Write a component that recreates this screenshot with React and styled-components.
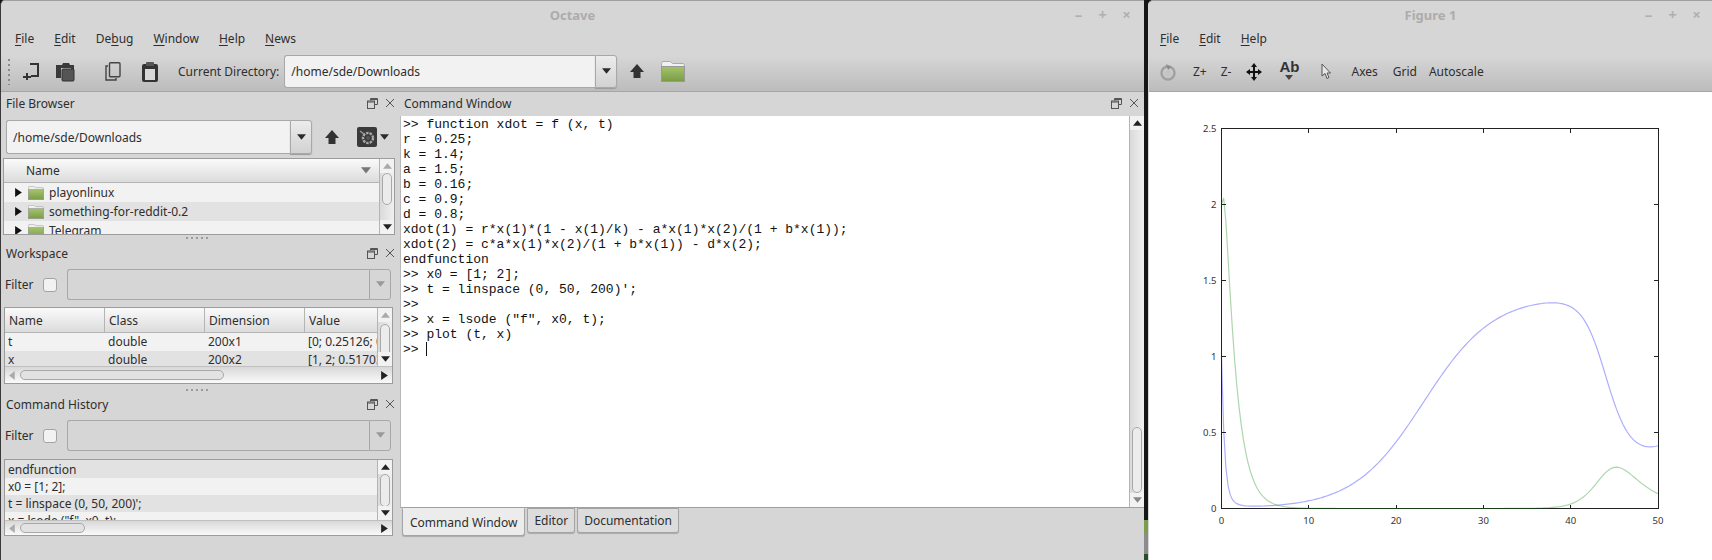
import React from "react";
import styled, { createGlobalStyle } from "styled-components";

const GlobalStyle = createGlobalStyle`
  html, body {
    margin: 0;
    padding: 0;
    background: #d6d6d6;
    overflow: hidden;
  }
  * {
    box-sizing: border-box;
  }
`;

const Screen = styled.div`
  display: flex;
  width: 1712px;
  height: 560px;
  overflow: hidden;
  background: #111;
  font-family: "Noto Sans", sans-serif;
  font-size: 12px;
  color: #2e2e2e;
`;

const Window = styled.div`
  display: flex;
  flex-direction: column;
  width: ${(p) => p.$width};
  flex: ${(p) => p.$flex || "none"};
  background: #d6d6d6;
  border-top: 1px solid #a0a0a0;
  border-left: 1px solid ${(p) => p.$edge};
  border-top-left-radius: 5px;
  overflow: hidden;
`;

const Divider = styled.div`
  width: 4px;
  flex: none;
  background: linear-gradient(
    #161616 0, #161616 520px, #7c9c4c 520px, #7c9c4c 533px, #8c8c8c 533px, #8c8c8c 554px, #2c4c2c 554px
  );
`;

const TitleBar = styled.div`
  position: relative;
  height: 28px;
  flex: none;
  display: flex;
  align-items: center;
  justify-content: center;
  font-weight: 700;
  color: #acacac;
  font-size: 13px;
`;

const WmButtons = styled.div`
  position: absolute;
  top: 5px;
  right: ${(p) => p.$right}px;
  display: flex;
  gap: 9px;
  color: #b0b0b0;
  font-size: 15px;
  font-weight: 700;
  line-height: 16px;
`;

const WmButton = styled.span`
  width: 15px;
  text-align: center;
`;

const MenuBar = styled.div`
  display: flex;
  height: 18px;
  flex: none;
  padding-left: ${(p) => p.$pad}px;
  align-items: center;
`;

const MenuItem = styled.span`
  padding: 0 10px;
  & u {
    text-underline-offset: 2px;
  }
`;

const Toolbar = styled.div`
  display: flex;
  align-items: center;
  height: 45px;
  flex: none;
  padding: 5px 0 0 ${(p) => p.$pad}px;
  background: linear-gradient(#d6d6d6, #d6d6d6 20%, #bcbcbc);
  border-bottom: 1px solid #a6a6a6;
`;

const ToolGrip = styled.div`
  width: 2px;
  height: 26px;
  margin-right: 13px;
  background: repeating-linear-gradient(#8a8a8a 0 2px, transparent 2px 5px);
`;

const ToolSlot = styled.span`
  display: flex;
  flex: none;
  justify-content: center;
  align-items: center;
  width: ${(p) => p.$w}px;
  margin-right: ${(p) => p.$gap || 0}px;
`;

const ToolLabel = styled.span`
  flex: none;
  margin-right: ${(p) => p.$gap || 0}px;
`;

const Combo = styled.div`
  display: flex;
  flex: none;
  width: ${(p) => p.$w}px;
  height: ${(p) => p.$h}px;
  margin-right: ${(p) => p.$gap || 0}px;
`;

const ComboField = styled.div`
  flex: 1;
  display: flex;
  align-items: center;
  padding-left: 6px;
  background: ${(p) => (p.$disabled ? "#d6d6d6" : "#f2f2f2")};
  border: 1px solid #a8a8a8;
  border-right: none;
  border-radius: 3px 0 0 3px;
  white-space: nowrap;
  overflow: hidden;
`;

const ComboButton = styled.div`
  width: 22px;
  flex: none;
  display: flex;
  align-items: center;
  justify-content: center;
  background: ${(p) => (p.$disabled ? "#d6d6d6" : "linear-gradient(#ececec, #d2d2d2)")};
  border: 1px solid #a8a8a8;
  border-radius: 0 3px 3px 0;
  box-shadow: ${(p) => (p.$disabled ? "none" : "0 1px 1px #999")};
`;

const Body = styled.div`
  flex: 1;
  display: flex;
  min-height: 0;
`;

const LeftDock = styled.div`
  width: 399px;
  flex: none;
  display: flex;
  flex-direction: column;
`;

const CenterDock = styled.div`
  flex: 1;
  display: flex;
  flex-direction: column;
  min-width: 0;
`;

const DockTitle = styled.div`
  height: ${(p) => p.$h}px;
  flex: none;
  display: flex;
  align-items: center;
  justify-content: space-between;
  padding: 0 ${(p) => p.$right}px 2px ${(p) => p.$left}px;
`;

const DockActions = styled.div`
  display: flex;
  align-items: center;
  gap: 7px;
`;

const ComboRow = styled.div`
  display: flex;
  align-items: center;
  height: 34px;
  padding-left: 5px;
  margin: 4px 0;
  flex: none;
`;

const FilterRow = styled.div`
  display: flex;
  align-items: center;
  height: 31px;
  padding-left: 4px;
  margin: ${(p) => p.$before}px 0 ${(p) => p.$after}px;
  flex: none;
`;

const FilterLabel = styled.span`
  width: 38px;
  flex: none;
`;

const Checkbox = styled.span`
  width: 14px;
  height: 14px;
  flex: none;
  margin-right: 10px;
  background: #f2f2f2;
  border: 1px solid #a4a4a4;
  border-radius: 3px;
`;

const Frame = styled.div`
  display: grid;
  grid-template-columns: 1fr 15px;
  grid-template-rows: ${(p) => p.$rows};
  width: ${(p) => p.$w}px;
  height: ${(p) => p.$h}px;
  margin-left: ${(p) => p.$left}px;
  border: 1px solid #9c9c9c;
  background: #f0f0f0;
  flex: none;
  overflow: hidden;
`;

const Pane = styled.div`
  min-width: 0;
  overflow: hidden;
`;

const HeaderRow = styled.div`
  display: grid;
  grid-template-columns: ${(p) => p.$cols};
  height: ${(p) => p.$h}px;
  background: linear-gradient(#fafafa, #dcdcdc);
  border-bottom: 1px solid #b4b4b4;
`;

const HeaderCell = styled.div`
  display: flex;
  align-items: center;
  justify-content: space-between;
  padding: 0 ${(p) => p.$right || 0}px 0 ${(p) => p.$left}px;
  border-right: ${(p) => (p.$last ? "none" : "1px solid #b4b4b4")};
`;

const Row = styled.div`
  display: grid;
  grid-template-columns: ${(p) => p.$cols || "1fr"};
  align-items: center;
  height: ${(p) => p.$h}px;
  padding-left: 3px;
  white-space: nowrap;
  overflow: hidden;
  background: ${(p) => (p.$alt ? "#e2e2e2" : "#f2f2f2")};
`;

const Cell = styled.span`
  overflow: hidden;
`;

const TreeItem = styled.div`
  display: flex;
  align-items: center;
  gap: 5px;
`;

const TreeToggle = styled.span`
  display: flex;
  width: 9px;
  margin-left: 7px;
`;

const ScrollBar = styled.div`
  display: flex;
  flex-direction: column;
  align-items: center;
  flex: none;
  width: 15px;
  background: linear-gradient(90deg, #dadada, #f0f0f0);
  border-left: 1px solid #b4b4b4;
  min-height: 0;
`;

const ScrollArrow = styled.div`
  flex: none;
  width: 100%;
  height: 14px;
  display: flex;
  align-items: center;
  justify-content: center;
  background: #f2f2f2;
`;

const ScrollTrack = styled.div`
  flex: 1;
  width: 100%;
  min-height: 0;
  display: flex;
  justify-content: center;
  padding-top: ${(p) => p.$offset}px;
`;

const ScrollThumb = styled.div`
  width: 10px;
  height: ${(p) => p.$h}px;
  background: #ececec;
  border: 1px solid #a8a8a8;
  border-radius: 5px;
  flex: none;
`;

const HScrollBar = styled.div`
  grid-column: 1 / 3;
  display: flex;
  align-items: center;
  background: linear-gradient(#d8d8d8, #fafafa);
  border-top: 1px solid #c0c0c0;
  padding: 0 3px;
`;

const HScrollTrack = styled.div`
  flex: 1;
  padding-left: 3px;
  display: flex;
  align-items: center;
`;

const HScrollThumb = styled.div`
  width: ${(p) => p.$w}px;
  height: 10px;
  background: #e2e2e2;
  border: 1px solid #a8a8a8;
  border-radius: 5px;
`;

const SplitGrip = styled.div`
  height: 8px;
  flex: none;
  margin: ${(p) => p.$margin};
  display: flex;
  justify-content: center;
  align-items: center;
  gap: 3px;
  width: 392px;
  & span {
    width: 2px;
    height: 2px;
    background: #9a9a9a;
  }
`;

const Terminal = styled.div`
  flex: none;
  height: 392px;
  display: flex;
  border-left: 1px solid #b8b8b8;
  border-bottom: 1px solid #a0a0a0;
`;

const TerminalText = styled.pre`
  flex: 1;
  margin: 0;
  padding: 1px 0 0 2px;
  background: #fff;
  color: #111;
  font-family: "Liberation Mono", monospace;
  font-size: 13px;
  line-height: 15px;
`;

const Caret = styled.span`
  display: inline-block;
  width: 1px;
  height: 14px;
  background: #111;
  vertical-align: -3px;
`;

const TabBar = styled.div`
  display: flex;
  align-items: flex-start;
  gap: 2px;
  padding-left: 2px;
  margin-top: -1px;
`;

const Tab = styled.div`
  display: flex;
  align-items: center;
  padding: 0 ${(p) => (p.$active ? 7 : 6)}px;
  height: ${(p) => (p.$active ? 28 : 25)}px;
  margin-top: 1px;
  background: ${(p) => (p.$active ? "#ececec" : "#dcdcdc")};
  border: 1px solid #a4a4a4;
  border-top: 1px solid ${(p) => (p.$active ? "#ececec" : "#a4a4a4")};
  border-radius: 0 0 3px 3px;
  box-shadow: 0 1px 1px #aaa;
`;

const PlotArea = styled.div`
  flex: 1;
  min-height: 0;
  background: #fff;
`;

const Dark = "#2b2b2b";

const FloatIcon = () => (
  <svg width="11" height="11" viewBox="0 0 11 11" fill="none" stroke="#555" strokeWidth="1">
    <path d="M3.5 2.5V.5h7v6H8" />
    <rect x=".5" y="3" width="7" height="7.5" />
    <path d="M.5 4h7M3.5 1.5h7" />
  </svg>
);

const CloseIcon = () => (
  <svg width="10" height="10" viewBox="0 0 10 10" stroke="#555" strokeWidth="1">
    <path d="M1 1l8 8M9 1l-8 8" />
  </svg>
);

const DockButtons = () => (
  <DockActions>
    <FloatIcon />
    <CloseIcon />
  </DockActions>
);

const Triangle = ({ dir = "down", size = 8, color = Dark }) => {
  const points = {
    down: "0,1 8,1 4,6",
    up: "0,6 8,6 4,1",
    left: "6,0 6,8 1,4",
    right: "1,0 1,8 7,4",
  };
  return (
    <svg width={size} height={size} viewBox="0 0 8 8">
      <polygon points={points[dir]} fill={color} />
    </svg>
  );
};

const UpArrow = () => (
  <svg width="14" height="15" viewBox="0 0 14 15">
    <path d="M7 0l7 8h-3.500v6h-7V8H0z" fill="#333" />
  </svg>
);

const FolderIcon = ({ w = 24, h = 21 }) => (
  <svg width={w} height={h} viewBox="0 0 24 21">
    <defs>
      <linearGradient id="folderFill" x1="0" y1="0" x2="0" y2="1">
        <stop offset="0" stopColor="#a4c46c" />
        <stop offset="1" stopColor="#7a9c44" />
      </linearGradient>
    </defs>
    <path d="M.5 20.500V2.500l1-2h8l2 2h11l1 2v16z" fill="#f0f0f0" stroke="#aaa" />
    <rect x=".5" y="5.500" width="23" height="15" fill="url(#folderFill)" stroke="#999" />
  </svg>
);

const NewScriptIcon = () => (
  <svg width="16" height="18" viewBox="0 0 16 18" fill="none" stroke="#333" strokeWidth="2">
    <path d="M7 1h8v12H8" />
    <path d="M4 10v7M0 14h8" />
  </svg>
);

const OpenIcon = () => (
  <svg width="19" height="20" viewBox="0 0 19 20">
    <path d="M0 3h6l1-2h6l1 2h4v13h-3V6H5v10H0z" fill="#3a3a3a" />
    <rect x="6" y="7" width="12" height="12" rx="1" fill="#555" stroke="#333" />
  </svg>
);

const CopyIcon = () => (
  <svg width="16" height="19" viewBox="0 0 16 19" fill="none" stroke="#444" strokeWidth="1.4">
    <rect x="4.500" y=".7" width="10.500" height="14" rx="1" />
    <path d="M3 4H1v14h10v-2" />
  </svg>
);

const PasteIcon = () => (
  <svg width="16" height="20" viewBox="0 0 16 20">
    <rect x="0" y="2" width="16" height="18" rx="2" fill="#333" />
    <rect x="4" y="0" width="8" height="4" rx="1" fill="#555" />
    <rect x="3" y="7" width="10" height="11" fill="#d8d8d8" />
  </svg>
);

const GearIcon = () => (
  <svg width="20" height="20" viewBox="0 0 20 20">
    <rect width="20" height="20" rx="2" fill="#3a3a3a" />
    <circle cx="11" cy="11" r="5" fill="none" stroke="#a8a8a8" strokeWidth="2.400" strokeDasharray="2.500 1" />
    <circle cx="11" cy="11" r="2" fill="#555" />
    <path d="M3 4l4 3" stroke="#999" strokeWidth="1.500" />
  </svg>
);

const ReloadIcon = () => (
  <svg width="16" height="18" viewBox="0 0 16 18" fill="none">
    <circle cx="8" cy="10" r="6.500" stroke="#a0a0a0" strokeWidth="2.400" />
    <circle cx="8" cy="10" r="3" fill="#c4c4c4" />
    <path d="M6 1l5 3-3 3z" fill="#8a8a8a" />
  </svg>
);

const MoveIcon = () => (
  <svg width="16" height="18" viewBox="0 0 16 18" fill="#111">
    <path d="M7 3h2v12H7z" />
    <path d="M1 8h14v2H1z" />
    <path d="M8 0l3 4H5zM8 18l3-4H5zM0 9l4-3v6zM16 9l-4-3v6z" />
  </svg>
);

const PointerIcon = () => (
  <svg width="10" height="17" viewBox="0 0 10 17">
    <path d="M1 1v12l3-2.500 2 5 2-1-2-4.500h3.500z" fill="#e6e6e6" stroke="#555" />
  </svg>
);

const AbIcon = styled.span`
  display: flex;
  flex-direction: column;
  align-items: center;
  font-family: "Liberation Sans", sans-serif;
  font-weight: 700;
  font-size: 15px;
  line-height: 14px;
  color: #333;
  height: 24px;
`;

const MENU = [
  ["", "F", "ile"],
  ["", "E", "dit"],
  ["De", "b", "ug"],
  ["", "W", "indow"],
  ["", "H", "elp"],
  ["", "N", "ews"],
];

const FIGURE_MENU = [
  ["", "F", "ile"],
  ["", "E", "dit"],
  ["", "H", "elp"],
];

const Menu = ({ items, gutter }) => (
  <MenuBar $pad={gutter}>
    {items.map(([before, key, after]) => (
      <MenuItem key={before + key + after}>
        {before}
        <u>{key}</u>
        {after}
      </MenuItem>
    ))}
  </MenuBar>
);

const VScroll = ({ thumb, offset, upColor = "#222", downColor = "#222" }) => (
  <ScrollBar>
    <ScrollArrow>
      <Triangle dir="up" size={9} color={upColor} />
    </ScrollArrow>
    <ScrollTrack $offset={offset}>
      <ScrollThumb $h={thumb} />
    </ScrollTrack>
    <ScrollArrow>
      <Triangle size={9} color={downColor} />
    </ScrollArrow>
  </ScrollBar>
);

const HScroll = ({ thumb }) => (
  <HScrollBar>
    <Triangle dir="left" size={9} color="#aaa" />
    <HScrollTrack>
      <HScrollThumb $w={thumb} />
    </HScrollTrack>
    <Triangle dir="right" size={9} color="#222" />
  </HScrollBar>
);

const Grip = ({ margin }) => (
  <SplitGrip $margin={margin}>
    <span /><span /><span /><span /><span />
  </SplitGrip>
);

const FilterBar = ({ before, after }) => (
  <FilterRow $before={before} $after={after}>
    <FilterLabel>Filter</FilterLabel>
    <Checkbox />
    <Combo $w={324} $h={31}>
      <ComboField $disabled />
      <ComboButton $disabled>
        <Triangle size={9} color="#999" />
      </ComboButton>
    </Combo>
  </FilterRow>
);

const WmControls = ({ right }) => (
  <WmButtons $right={right}>
    <WmButton>–</WmButton>
    <WmButton>+</WmButton>
    <WmButton>×</WmButton>
  </WmButtons>
);

const TREE_ROWS = ["playonlinux", "something-for-reddit-0.2", "Telegram"];
const WORKSPACE_COLS = "100px 100px 100px 1fr";
const WORKSPACE_ROWS = [
  ["t", "double", "200x1", "[0; 0.25126; 0"],
  ["x", "double", "200x2", "[1, 2; 0.51703"],
];
const HISTORY = ["endfunction", "x0 = [1; 2];", "t = linspace (0, 50, 200)';", 'x = lsode ("f", x0, t);'];

const SESSION = `>> function xdot = f (x, t)
r = 0.25;
k = 1.4;
a = 1.5;
b = 0.16;
c = 0.9;
d = 0.8;
xdot(1) = r*x(1)*(1 - x(1)/k) - a*x(1)*x(2)/(1 + b*x(1));
xdot(2) = c*a*x(1)*x(2)/(1 + b*x(1)) - d*x(2);
endfunction
>> x0 = [1; 2];
>> t = linspace (0, 50, 200)';
>>
>> x = lsode ("f", x0, t);
>> plot (t, x)
>> `;

// same system as in the session, so the curves come out of the equations
const deriv = ([x1, x2]) => {
  const r = 0.25, k = 1.4, a = 1.5, b = 0.16, c = 0.9, d = 0.8;
  const q = (x1 * x2) / (1 + b * x1);
  return [r * x1 * (1 - x1 / k) - a * q, c * a * q - d * x2];
};

const solve = () => {
  const out = [];
  let s = [1, 2];
  const dt = 50 / 199 / 40;
  for (let i = 0; i < 200; i++) {
    out.push([(i * 50) / 199, s[0], s[1]]);
    for (let j = 0; j < 40; j++) {
      const k1 = deriv(s);
      const k2 = deriv([s[0] + (dt / 2) * k1[0], s[1] + (dt / 2) * k1[1]]);
      const k3 = deriv([s[0] + (dt / 2) * k2[0], s[1] + (dt / 2) * k2[1]]);
      const k4 = deriv([s[0] + dt * k3[0], s[1] + dt * k3[1]]);
      s = [
        s[0] + (dt / 6) * (k1[0] + 2 * k2[0] + 2 * k3[0] + k4[0]),
        s[1] + (dt / 6) * (k1[1] + 2 * k2[1] + 2 * k3[1] + k4[1]),
      ];
    }
  }
  return out;
};

const PLOT = { left: 72.5, right: 509, top: 36.5, bottom: 416.5 };
const px = (t) => PLOT.left + (t / 50) * (PLOT.right - PLOT.left);
const py = (v) => PLOT.bottom - (v / 2.5) * (PLOT.bottom - PLOT.top);

const Plot = () => {
  const data = solve();
  const line = (idx) => data.map((d) => `${px(d[0]).toFixed(2)},${py(d[idx]).toFixed(2)}`).join(" ");
  const xs = [0, 10, 20, 30, 40, 50];
  const ys = [0, 0.5, 1, 1.5, 2, 2.5];
  return (
    <svg width="563" height="467" viewBox="0 0 563 467" display="block">
      <g stroke="#222" strokeWidth="1" shapeRendering="crispEdges" fill="none">
        <rect x={PLOT.left} y={PLOT.top} width={PLOT.right - PLOT.left} height={PLOT.bottom - PLOT.top} />
        {xs.slice(1, -1).map((t) => (
          <path key={t} d={`M${px(t)} ${PLOT.top}v4M${px(t)} ${PLOT.bottom}v-4`} />
        ))}
        {ys.slice(1, -1).map((v) => (
          <path key={v} d={`M${PLOT.left} ${py(v)}h4M${PLOT.right} ${py(v)}h-4`} />
        ))}
      </g>
      <polyline points={line(1)} fill="none" stroke="#0000ff" strokeOpacity="0.32" strokeWidth="1.2" />
      <polyline points={line(2)} fill="none" stroke="#008000" strokeOpacity="0.32" strokeWidth="1.2" />
      <g fontFamily="'Noto Sans', sans-serif" fontSize="9.5" fill="#333">
        {xs.map((t) => (
          <text key={t} x={px(t)} y={PLOT.bottom + 15} textAnchor="middle">{t}</text>
        ))}
        {ys.map((v) => (
          <text key={v} x={PLOT.left - 5} y={py(v) + 3} textAnchor="end">{v}</text>
        ))}
      </g>
    </svg>
  );
};

const App = () => (
  <Screen>
    <GlobalStyle />
    <Window $width="1144px" $edge="#3a3a3a">
      <TitleBar>
        Octave
        <WmControls right={10} />
      </TitleBar>
      <Menu items={MENU} gutter={4} />
      <Toolbar $pad={7}>
        <ToolGrip />
        <ToolSlot $w={16} $gap={17}><NewScriptIcon /></ToolSlot>
        <ToolSlot $w={19} $gap={30}><OpenIcon /></ToolSlot>
        <ToolSlot $w={16} $gap={21}><CopyIcon /></ToolSlot>
        <ToolSlot $w={16} $gap={20}><PasteIcon /></ToolSlot>
        <ToolLabel $gap={5}>Current Directory:</ToolLabel>
        <Combo $w={333} $h={33} $gap={13}>
          <ComboField>/home/sde/Downloads</ComboField>
          <ComboButton><Triangle size={9} /></ComboButton>
        </Combo>
        <ToolSlot $w={14} $gap={17}><UpArrow /></ToolSlot>
        <FolderIcon />
      </Toolbar>
      <Body>
        <LeftDock>
          <DockTitle $h={24} $left={5} $right={5}>
            File Browser
            <DockButtons />
          </DockTitle>
          <ComboRow>
            <Combo $w={306} $h={34} $gap={13}>
              <ComboField>/home/sde/Downloads</ComboField>
              <ComboButton><Triangle size={9} /></ComboButton>
            </Combo>
            <ToolSlot $w={14} $gap={18}><UpArrow /></ToolSlot>
            <ToolSlot $w={20} $gap={3}><GearIcon /></ToolSlot>
            <Triangle size={9} />
          </ComboRow>
          <Frame $w={392} $h={77} $left={2} $rows="1fr">
            <Pane>
              <HeaderRow $cols="1fr" $h={24}>
                <HeaderCell $left={22} $right={8} $last>
                  Name
                  <Triangle size={10} color="#777" />
                </HeaderCell>
              </HeaderRow>
              {TREE_ROWS.map((name, i) => (
                <Row key={name} $h={19} $alt={i % 2 === 1}>
                  <TreeItem>
                    <TreeToggle><Triangle dir="right" size={9} color="#111" /></TreeToggle>
                    <FolderIcon w={16} h={14} />
                    {name}
                  </TreeItem>
                </Row>
              ))}
            </Pane>
            <VScroll thumb={32} offset={0} upColor="#aaa" />
          </Frame>
          <Grip margin="-1px 0 0" />
          <DockTitle $h={24} $left={5} $right={5}>
            Workspace
            <DockButtons />
          </DockTitle>
          <FilterBar before={3} after={7} />
          <Frame $w={389} $h={77} $left={3} $rows="1fr 17px">
            <Pane>
              <HeaderRow $cols={WORKSPACE_COLS} $h={25}>
                <HeaderCell $left={4}>Name</HeaderCell>
                <HeaderCell $left={4}>Class</HeaderCell>
                <HeaderCell $left={4}>Dimension</HeaderCell>
                <HeaderCell $left={4} $last>Value</HeaderCell>
              </HeaderRow>
              {WORKSPACE_ROWS.map((cells, i) => (
                <Row key={cells[0]} $h={17.5} $cols={WORKSPACE_COLS} $alt={i % 2 === 1}>
                  {cells.map((c) => <Cell key={c}>{c}</Cell>)}
                </Row>
              ))}
            </Pane>
            <VScroll thumb={32} offset={2} upColor="#aaa" />
            <HScroll thumb={204} />
          </Frame>
          <Grip margin="2px 0 0" />
          <DockTitle $h={22} $left={5} $right={5}>
            Command History
            <DockButtons />
          </DockTitle>
          <FilterBar before={4} after={8} />
          <Frame $w={389} $h={77} $left={3} $rows="1fr 15px">
            <Pane>
              {HISTORY.map((h, i) => (
                <Row key={h} $h={i === 0 ? 18 : 17} $alt={i % 2 === 0}>{h}</Row>
              ))}
            </Pane>
            <VScroll thumb={33} offset={0} />
            <HScroll thumb={65} />
          </Frame>
        </LeftDock>
        <CenterDock>
          <DockTitle $h={24} $left={4} $right={5}>
            Command Window
            <DockButtons />
          </DockTitle>
          <Terminal>
            <TerminalText>{SESSION}<Caret /></TerminalText>
            <VScroll thumb={66} offset={297} downColor="#888" />
          </Terminal>
          <TabBar>
            <Tab $active>Command Window</Tab>
            <Tab>Editor</Tab>
            <Tab>Documentation</Tab>
          </TabBar>
        </CenterDock>
      </Body>
    </Window>
    <Divider />
    <Window $flex="1" $edge="#d6d6d6">
      <TitleBar>
        Figure 1
        <WmControls right={8} />
      </TitleBar>
      <Menu items={FIGURE_MENU} gutter={1} />
      <Toolbar $pad={11}>
        <ToolSlot $w={16} $gap={17}><ReloadIcon /></ToolSlot>
        <ToolLabel $gap={14}>Z+</ToolLabel>
        <ToolLabel $gap={15}>Z-</ToolLabel>
        <ToolSlot $w={16} $gap={16}><MoveIcon /></ToolSlot>
        <ToolSlot $w={22} $gap={21}>
          <AbIcon>
            Ab
            <Triangle size={8} color="#444" />
          </AbIcon>
        </ToolSlot>
        <ToolSlot $w={10} $gap={20}><PointerIcon /></ToolSlot>
        <ToolLabel $gap={15}>Axes</ToolLabel>
        <ToolLabel $gap={12}>Grid</ToolLabel>
        <ToolLabel>Autoscale</ToolLabel>
      </Toolbar>
      <PlotArea>
        <Plot />
      </PlotArea>
    </Window>
  </Screen>
);

export default App;
